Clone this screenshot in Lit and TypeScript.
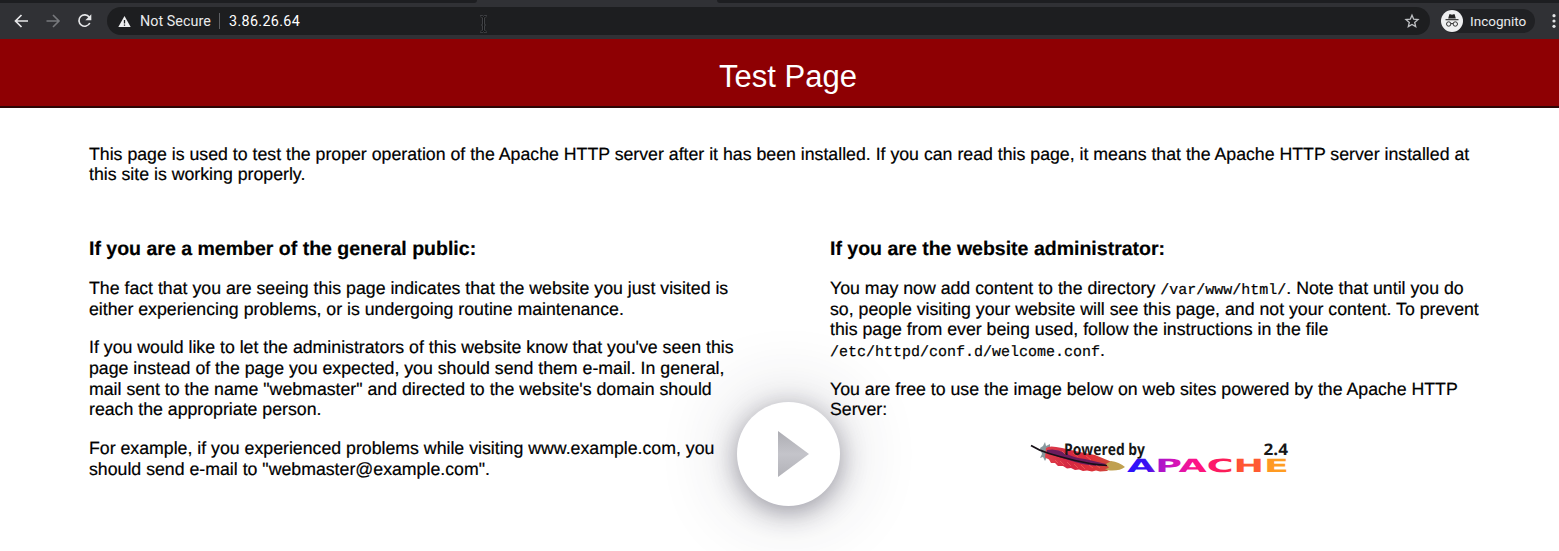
import { LitElement, html, css } from "lit";
import { customElement } from "lit/decorators.js";

@customElement("browser-bar")
class BrowserBar extends LitElement {
  static styles = css`
    :host { display: flex; flex-direction: column; height: 39px; background: #303135; font-family: Roboto, sans-serif; color: #e9eaec; }
    .tabs { display: flex; justify-content: space-between; height: 3px; }
    .strip { background: #1d1e21; }
    .left { width: 477px; border-radius: 0 0 3px 0; }
    .right { width: 842px; border-radius: 0 0 0 3px; }
    .row { display: flex; align-items: center; height: 36px; box-sizing: border-box; padding: 0 0 0 12px; overflow: hidden; }
    svg { display: block; flex: none; }
    .nav { display: flex; gap: 14px; }
    .address { display: flex; align-items: center; box-sizing: border-box; width: 1323px; height: 28px; margin-left: 13px; padding: 0 10px 0 10px; border-radius: 14px; background: #1d1e20; font-size: 14.3px; }
    .label { margin-left: 8px; width: 71px; white-space: nowrap; letter-spacing: .05px; }
    .sep { width: 1px; height: 16px; background: #5d5f63; margin: 0 9px 0 8px; }
    .url { color: #fff; width: 250px; letter-spacing: .36px; }
    .star { margin-left: auto; }
    .profile { display: flex; align-items: center; gap: 7px; box-sizing: border-box; width: 94px; height: 24px; margin-left: 11px; border-radius: 12px; background: #202124; font-size: 13.5px; }
    .menu { margin-left: 16px; }
  `;
  render() {
    return html`
      <div class="tabs"><div class="strip left"></div><div class="strip right"></div></div>
      <div class="row">
        <div class="nav">
          <svg width="18" height="18" viewBox="0 0 18 18" fill="none" stroke="#e6e7e9" stroke-width="1.7"><path d="M16 9H4M9.500 3l-6 6 6 6"/></svg>
          <svg width="18" height="18" viewBox="0 0 18 18" fill="none" stroke="#77797d" stroke-width="1.6"><path d="M2.500 9h12.500M9 3l6 6-6 6"/></svg>
          <svg width="18" height="18" viewBox="0 0 18 18"><path d="M13.300 5.200A5.700 5.700 0 1 0 13.800 11" fill="none" stroke="#e6e7e9" stroke-width="1.7"/><path d="M15.300 2.200v6H9.300z" fill="#e6e7e9"/></svg>
        </div>
        <div class="address">
          <svg width="15" height="13" viewBox="0 0 15 13"><path d="M7.500 1L13.700 12H1.300z" fill="#eeeff0"/><path d="M7.500 5v3.500M7.500 9.500v1.300" stroke="#1d1e20" stroke-width="1.300"/></svg>
          <span class="label">Not Secure</span><span class="sep"></span><span class="url">3.86.26.64</span>
          <svg class="star" width="16" height="16" viewBox="0 0 16 16" fill="none" stroke="#bfc1c4" stroke-width="1.300"><path d="M8 2.200l1.700 4 4.300.4-3.300 2.800 1 4.200L8 11.400l-3.700 2.200 1-4.200L2 6.600l4.300-.4z"/></svg>
        </div>
        <div class="profile">
          <svg width="22" height="22" viewBox="0 0 22 22"><circle cx="11" cy="11" r="11" fill="#eeeff0"/><path d="M7.200 8.500L8.300 4.600q.3-.7 1-.4L11 4.700l1.700-.5q.7-.3 1 .4l1.100 3.900z" fill="#222"/><path d="M4.500 9.700h13" stroke="#222" stroke-width="1.100"/><g fill="none" stroke="#333" stroke-width="1"><circle cx="7.700" cy="14" r="2.200"/><circle cx="14.300" cy="14" r="2.200"/><path d="M9.900 13.800q1.100-.8 2.200 0"/></g></svg>
          <span>Incognito</span>
        </div>
        <svg class="menu" width="6" height="16" viewBox="0 0 6 16" fill="#e2e3e5"><circle cx="3" cy="2.700" r="1.600"/><circle cx="3" cy="8" r="1.600"/><circle cx="3" cy="13.300" r="1.600"/></svg>
      </div>`;
  }
}

@customElement("apache-badge")
class ApacheBadge extends LitElement {
  static styles = css`
    :host { display: block; width: 264px; height: 46px; }
    svg { display: block; overflow: visible; }
    .small { font: bold 16px "Open Sans", sans-serif; fill: #171717; }
    .big { font: bold 18.2px "DejaVu Sans", sans-serif; }
  `;
  render() {
    return html`<svg width="264" height="46" viewBox="0 0 264 46">
      <defs>
        <linearGradient id="name" gradientUnits="userSpaceOnUse" x1="97" x2="258" y1="0" y2="0">
          <stop offset="0" stop-color="#2a10ff"/><stop offset=".13" stop-color="#3a10f0"/><stop offset=".2" stop-color="#a814cc"/><stop offset=".3" stop-color="#d414b8"/><stop offset=".43" stop-color="#ff1384"/><stop offset=".62" stop-color="#fb1d55"/><stop offset=".7" stop-color="#ff5532"/><stop offset=".83" stop-color="#ff5b32"/><stop offset=".88" stop-color="#ff9822"/><stop offset="1" stop-color="#ff9f22"/>
        </linearGradient>
        <linearGradient id="feather" x1="0" x2="1"><stop offset="0" stop-color="#e0404a"/><stop offset=".35" stop-color="#d42843"/><stop offset=".7" stop-color="#de3038"/><stop offset="1" stop-color="#c84c3c"/></linearGradient>
      </defs>
      <path d="M10 14l3-2 2-4 1 4 4-2v14l-3-1-2 4-2-4-3 1 2-4z" fill="#88989d"/>
      <path d="M16 14Q19 11 32 14q17 4 33 7l17 7-1 6-4 3-7 .5-4-1-4 1-5-1-4 .5-4-1.500-4 .5-4-2-4 .5-4-2.500-5 0-3-3-4 0-2-3.500-4-2z" fill="url(#feather)"/>
      <path d="M17 16q9-2 18 3t20 6l21 5-2 2q-17 0-29-4-13-4-28-9z" fill="#6c1c5e"/>
      <path d="M25 26l3 3m2-2l4 4m3-3l4 4m3-2l4 4m3-3l4 4m4-4l4 3m3-3l4 3M32 17l4 4m7-2l5 4m8-1l5 4" stroke="#f2615f" stroke-width=".7"/>
      <path d="M1 11.500Q9 16.500 19 19.500t26 7 32 5" fill="none" stroke="#171017" stroke-width="1.700"/>
      <path d="M76 30l5-3q8 1 14 6-5 4-15 3.500l-5-1 4-2z" fill="#c0a050"/>
      <text class="small" x="34" y="20.500" textLength="81" lengthAdjust="spacingAndGlyphs">Powered by</text>
      <text class="small" x="233.500" y="20.500" textLength="24.500" lengthAdjust="spacingAndGlyphs">2.4</text>
      <text class="big" x="97" y="38" fill="url(#name)" textLength="162" lengthAdjust="spacingAndGlyphs">APACHE</text>
    </svg>`;
  }
}

@customElement("app-root")
class AppRoot extends LitElement {
  static styles = css`
    :host { display: block; position: relative; height: 551px; overflow: hidden; background: #fff; color: #000; font: 17.73px/20.67px "Liberation Sans", Arial, sans-serif; }
    h1 { display: flex; align-items: center; justify-content: center; box-sizing: border-box; height: 69px; margin: 0; padding: 8px 0 0 17px; background: #8e0003; border-bottom: 2px solid #2c0505; color: #fff; font-size: 31px; font-weight: 400; line-height: 36px; }
    .body { padding: 35.700px 70px 0 89px; white-space: nowrap; text-rendering: geometricPrecision; -webkit-text-stroke: .2px #000; }
    p { margin: 0 0 17.900px; }
    .cols { display: grid; grid-template-columns: 741px 1fr; margin-top: 53px; }
    h2 { margin: 0 0 17px; font-size: 19.520px; line-height: 23px; }
    code { font: 15px "Liberation Mono", monospace; line-height: 1; }
    .logo { margin-left: 200px; margin-top: -4px; -webkit-text-stroke: 0; }
    .play { position: absolute; left: 737px; top: 402px; width: 103px; height: 104px; border-radius: 50%; display: flex; align-items: center; justify-content: center; background: #fff; box-shadow: 0 6px 26px rgba(42,40,62,.42), 0 0 80px rgba(42,40,62,.24); }
    .play svg { display: block; margin-left: 8px; }
    .cursor { position: absolute; left: 478px; top: 14px; }
  `;
  render() {
    return html`
      <browser-bar></browser-bar>
      <svg class="cursor" width="11" height="20" viewBox="0 0 11 20" fill="none"><path d="M2 2q3 0 3.500 2Q6 2 9 2M5.500 4v12M2 18q3 0 3.500-2 .5 2 3.500 2M3.500 11h4" stroke="#5f6164" stroke-width="2.200"/><path d="M2 2q3 0 3.500 2Q6 2 9 2M5.500 4v12M2 18q3 0 3.500-2 .5 2 3.500 2M3.500 11h4" stroke="#111214" stroke-width="1.100"/></svg>
      <h1>Test Page</h1>
      <div class="body">
        <p>This page is used to test the proper operation of the Apache HTTP server after it has been installed. If you can read this page, it means that the Apache HTTP server installed at<br>this site is working properly.</p>
        <div class="cols">
          <section>
            <h2>If you are a member of the general public:</h2>
            <p>The fact that you are seeing this page indicates that the website you just visited is<br>either experiencing problems, or is undergoing routine maintenance.</p>
            <p>If you would like to let the administrators of this website know that you've seen this<br>page instead of the page you expected, you should send them e-mail. In general,<br>mail sent to the name "webmaster" and directed to the website's domain should<br>reach the appropriate person.</p>
            <p>For example, if you experienced problems while visiting www.example.com, you<br>should send e-mail to "webmaster@example.com".</p>
          </section>
          <section>
            <h2>If you are the website administrator:</h2>
            <p>You may now add content to the directory <code>/var/www/html/</code>. Note that until you do<br>so, people visiting your website will see this page, and not your content. To prevent<br>this page from ever being used, follow the instructions in the file<br><code>/etc/httpd/conf.d/welcome.conf</code>.</p>
            <p>You are free to use the image below on web sites powered by the Apache HTTP<br>Server:</p>
            <apache-badge class="logo"></apache-badge>
          </section>
        </div>
      </div>
      <div class="play"><svg width="32" height="48" viewBox="0 0 32 48"><defs><linearGradient id="tri" x1="0" y1="0" x2="0" y2="1"><stop stop-color="#adadb3"/><stop offset=".5" stop-color="#c4c4ca"/><stop offset="1" stop-color="#b2b2b8"/></linearGradient></defs><path d="M1 1l31 23L1 47z" fill="url(#tri)"/></svg></div>`;
  }
}
